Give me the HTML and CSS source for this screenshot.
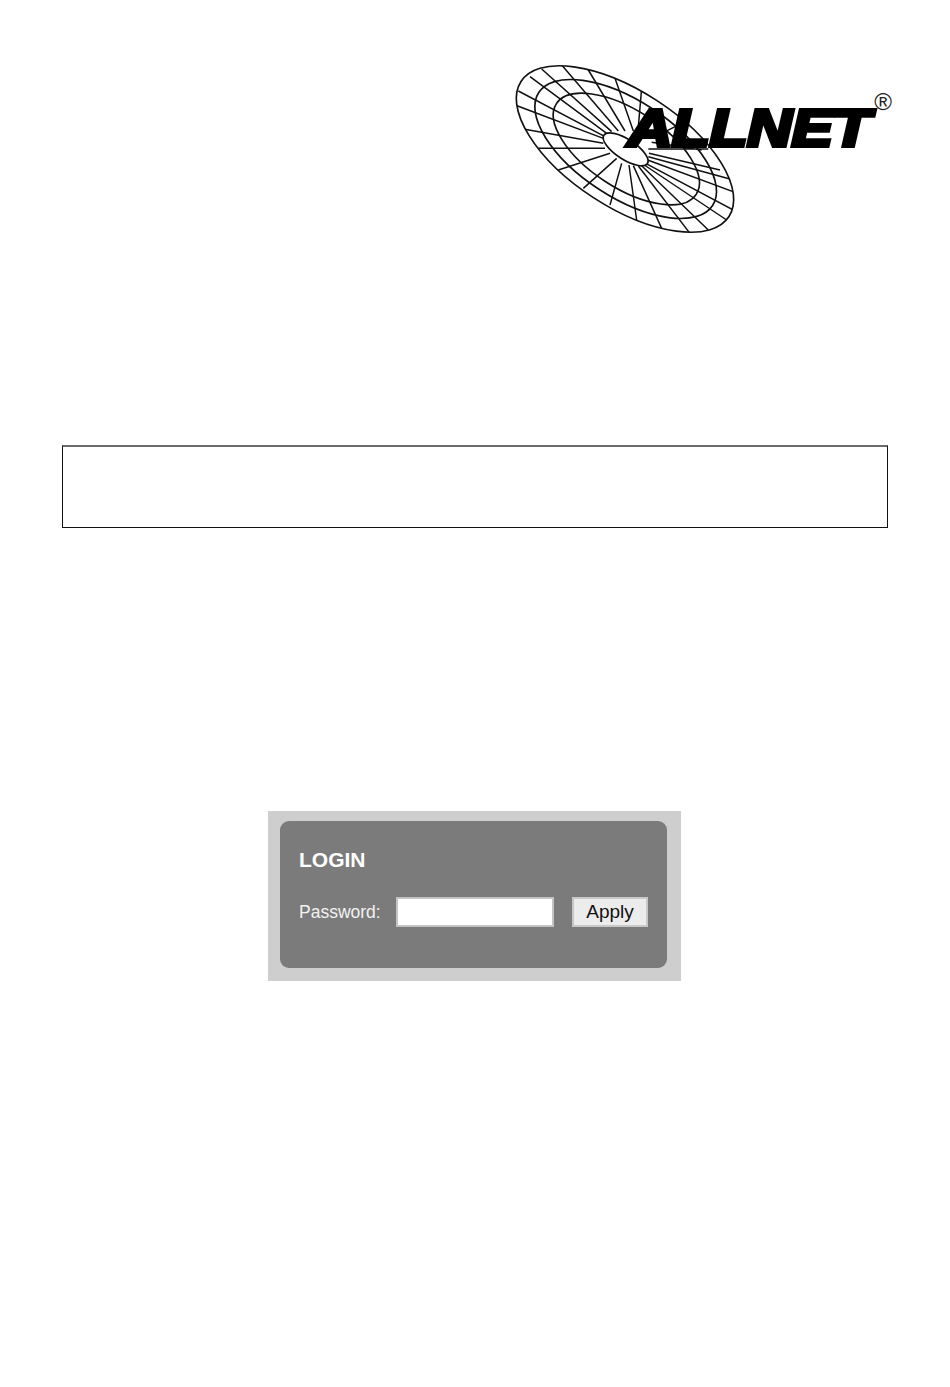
FILE: index.html
```html
<!DOCTYPE html>
<html lang="en">
<head>
<meta charset="utf-8">
<title>ALLNET Login</title>
<link rel="stylesheet" href="styles.css">
</head>
<body>
<main class="page">
  <header class="logo-row">
    <svg class="logo" viewBox="0 0 1200 570" role="img" aria-label="ALLNET">
      <defs>
        <clipPath id="dish"><ellipse cx="360" cy="282" rx="372" ry="174" transform="rotate(33 360 282)"/></clipPath>
      </defs>
      <g class="rings">
        <ellipse cx="360" cy="282" rx="372" ry="174" transform="rotate(33 360 282)"/>
        <ellipse cx="362" cy="282" rx="311" ry="145" transform="rotate(33 362 282)"/>
        <ellipse cx="364" cy="282" rx="250" ry="116" transform="rotate(33 364 282)"/>
      </g>
      <g clip-path="url(#dish)">
        <path class="spokes" d="M305 235L75 65M320 230L110 42M340 228L170 30M360 228L250 45M385 228L330 70M400 215L410 100M300 245L40 108M295 250L30 150M295 265L55 222M300 280H100M315 295L160 345M335 310L235 400M350 325L315 450M372 330L395 495M385 332L470 520M400 333L555 535M410 332L610 525M418 330L665 495M422 325L690 468M428 315L690 412M430 305L675 372M432 295L645 345M430 282H610M440 262L590 285M440 250L530 205"/>
      </g>
      <ellipse class="hub" cx="362" cy="283" rx="78" ry="30" transform="rotate(33 362 283)"/>
      <text class="brand" x="368" y="272" textLength="728" lengthAdjust="spacingAndGlyphs">ALLNET</text>
      <text class="reg" x="1108" y="165">®</text>
    </svg>
  </header>

  <section class="notice"></section>

  <section class="login-frame">
    <form class="login-panel">
      <h1 class="login-title">LOGIN</h1>
      <div class="login-row">
        <label class="login-label" for="pw">Password:</label>
        <input class="login-input" id="pw" type="password">
        <button class="login-button" type="button">Apply</button>
      </div>
    </form>
  </section>
</main>
</body>
</html>
```
FILE: styles.css
```css
* { box-sizing: border-box; }

html, body {
  margin: 0;
  background: #fff;
}

.page {
  width: 950px;
  height: 1387px;
  overflow: hidden;
  padding-top: 55px;
  font-family: "Liberation Sans", Arial, sans-serif;
}

.logo-row {
  display: flex;
  justify-content: flex-end;
  padding-right: 45px;
}

.logo {
  display: block;
  width: 400px;
  height: 190px;
}

.rings ellipse {
  fill: none;
  stroke: #111;
  stroke-width: 5;
}

.spokes {
  fill: none;
  stroke: #111;
  stroke-width: 4.5;
}

.hub {
  fill: #fff;
  stroke: #111;
  stroke-width: 5;
}

.brand {
  font-family: "Liberation Sans", Arial, sans-serif;
  font-weight: 700;
  font-style: italic;
  font-size: 154px;
  fill: #000;
  stroke: #000;
  stroke-width: 12px;
}

.reg {
  font-family: "Liberation Sans", Arial, sans-serif;
  font-size: 72px;
  fill: #222;
}

.notice {
  width: 826px;
  height: 83px;
  margin: 200px 0 0 62px;
  border: 1px solid #111;
  border-top: 2px solid #6a6a6a;
}

.login-frame {
  width: 413px;
  height: 170px;
  margin: 283px 0 0 268px;
  padding: 10px 14px 13px 12px;
  background: #cecece;
}

.login-panel {
  height: 147px;
  padding: 27px 19px 0;
  border-radius: 9px;
  background: #7b7b7b;
}

.login-title {
  margin: 0;
  color: #fff;
  font-size: 21px;
  font-weight: 700;
  line-height: 24px;
}

.login-row {
  display: flex;
  align-items: center;
  margin-top: 25px;
}

.login-label {
  width: 97px;
  color: #f2f2f2;
  font-size: 17.5px;
  line-height: 30px;
}

.login-input {
  width: 158px;
  height: 30px;
  padding: 0;
  border: 2px solid #c4c4c4;
  background: #fff;
}

.login-button {
  width: 76px;
  height: 30px;
  margin-left: 18px;
  padding: 0;
  border: 2px solid #c8c8c8;
  background: #ececec;
  color: #111;
  font-family: "Liberation Sans", Arial, sans-serif;
  font-size: 19px;
}
```
